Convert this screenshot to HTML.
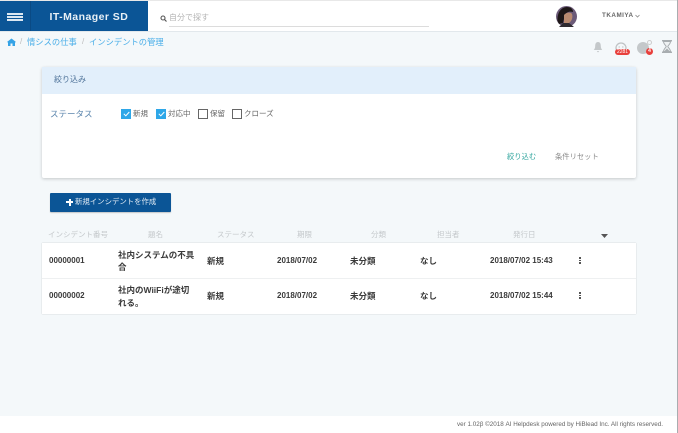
<!DOCTYPE html>
<html lang="ja"><head><meta charset="utf-8">
<style>
html,body{margin:0;padding:0}
body{width:678px;height:433px;position:relative;overflow:hidden;background:#f4f8fa;font-family:"Liberation Sans","Noto Sans CJK JP",sans-serif;color:#333}
#w{left:0;top:0;width:678px;height:433px;filter:blur(.3px)}
div,span{position:absolute;white-space:nowrap}
.t{line-height:12px}
.h{font-size:7.5px;color:#c4c8cb;top:229px}
.c{font-size:8px;font-weight:bold;color:#3a3a3a;line-height:12px}
.cb{width:10px;height:10px;top:109px;box-sizing:border-box;border:1px solid #666;background:#fff}
.on{background:#2ea7e8;border-color:#2ea7e8}
.l{font-size:7.5px;color:#666;top:108px;line-height:12px}
</style></head><body><div id="w">
<div style="left:0;top:0;width:678px;height:1px;background:#e8e8e8"></div>
<div style="left:0;top:1px;width:678px;height:30px;background:#fff;border-bottom:1px solid #e2e8ec"></div>
<div style="left:0;top:1px;width:148px;height:30px;background:#0b5596"></div>
<div style="left:30px;top:1px;width:1px;height:30px;background:#0a4a84"></div>
<div style="left:7px;top:13px;width:16px;height:1.5px;background:#dce8f2"></div>
<div style="left:7px;top:16px;width:16px;height:1.5px;background:#dce8f2"></div>
<div style="left:7px;top:19px;width:16px;height:1.5px;background:#dce8f2"></div>
<div class="t" style="left:49.5px;top:10.500px;font-size:10.500px;font-weight:bold;color:#e8f0f6;letter-spacing:.45px">IT-Manager SD</div>
<svg style="position:absolute;left:160px;top:15px" width="7" height="7" viewBox="0 0 7 7"><circle cx="3" cy="3" r="2" fill="none" stroke="#555" stroke-width="1.1"/><path d="M4.500 4.500L6.500 6.500" stroke="#555" stroke-width="1.2"/></svg>
<div class="t" style="left:169px;top:12px;font-size:8px;color:#b5b5b5">自分で探す</div>
<div style="left:169px;top:26px;width:260px;height:1px;background:#dcdcdc"></div>
<svg style="position:absolute;left:556px;top:6px" width="21" height="21" viewBox="0 0 21 21"><circle cx="10.500" cy="10.500" r="10.500" fill="#6b5a78"/><path d="M1.500 15C1 7 5 1 11 1C15 1 17 3 17 6C14 5 10 6 9 9L7 17L3 18Z" fill="#1e1718"/><path d="M8 9C10 6 15 6 16 8C17 11 16 15 13 17L8 17Z" fill="#b98a70"/><path d="M3 21L7 17L13 17L18 21Z" fill="#2f2a30"/></svg>
<div class="t" style="left:602px;top:10px;font-size:6.300px;font-weight:bold;color:#666;letter-spacing:.5px">TKAMIYA</div>
<svg style="position:absolute;left:635px;top:14px" width="5" height="4" viewBox="0 0 5 4"><path d="M.5 1L2.500 3L4.500 1" fill="none" stroke="#888" stroke-width=".8"/></svg>

<svg style="position:absolute;left:7px;top:38px" width="9" height="8" viewBox="0 0 9 8"><path d="M0 4L4.500 .5L9 4L8 4.500V8H5.500V5.500H3.500V8H1V4.500Z" fill="#35a3e6"/></svg>
<div class="t" style="left:20px;top:36px;font-size:8px;color:#bbb">/</div>
<div class="t" style="left:27px;top:36px;font-size:8.300px;color:#4aaee8">情シスの仕事</div>
<div class="t" style="left:82px;top:36px;font-size:8px;color:#bbb">/</div>
<div class="t" style="left:89px;top:36px;font-size:8.300px;color:#4aaee8">インシデントの管理</div>

<svg style="position:absolute;left:592px;top:41px" width="12" height="12" viewBox="0 0 12 12"><path d="M6 1C3.800 1 3.200 3 3.200 5C3.200 7 2.500 8 1.800 9H10.200C9.500 8 8.800 7 8.800 5C8.800 3 8.200 1 6 1Z" fill="#c4c8ca"/><path d="M4.800 10H7.200L6 11.500Z" fill="#c4c8ca"/></svg>
<svg style="position:absolute;left:614px;top:42px" width="14" height="12" viewBox="0 0 14 12"><circle cx="7" cy="6" r="5" fill="none" stroke="#bfc3c5" stroke-width="1.300"/><path d="M4.500 5H6M8 5H9.500" stroke="#bfc3c5"/></svg>
<div style="left:615px;top:49px;width:15px;height:6px;border-radius:3px;background:#e8403c;color:#fff;font-size:5px;line-height:6px;text-align:center">2281</div>
<div style="left:637px;top:42px;width:12px;height:12px;border-radius:50%;background:#c4c8ca"></div>
<div style="left:647px;top:40px;width:3px;height:3px;border:1px solid #ccc;border-radius:50%"></div>
<div style="left:646px;top:48px;width:7px;height:7px;border-radius:50%;background:#e8403c;color:#fff;font-size:5px;font-weight:bold;line-height:7px;text-align:center">4</div>
<svg style="position:absolute;left:661px;top:40px" width="12" height="13" viewBox="0 0 12 13"><path d="M1 .8H11M1 12.200H11" stroke="#a8adb0" stroke-width="1.500"/><path d="M2.500 1.500H9.500C9.500 4 7 5.500 6.800 6.500C7 7.500 9.500 9 9.500 11.500H2.500C2.500 9 5 7.500 5.200 6.500C5 5.500 2.500 4 2.500 1.500Z" fill="#eef1f2" stroke="#a8adb0"/><path d="M3.500 11H8.500L6 8.500Z" fill="#a8adb0"/></svg>

<div style="left:42px;top:67px;width:594px;height:111px;background:#fff;border-radius:2px;box-shadow:0 1px 3px rgba(0,0,0,.2)"></div>
<div style="left:42px;top:67px;width:594px;height:27px;background:#e2effb"></div>
<div class="t" style="left:54px;top:74px;font-size:8px;color:#4f7399">絞り込み</div>
<div class="t" style="left:50px;top:108px;font-size:8.500px;color:#5c86ad">ステータス</div>
<div class="cb on" style="left:121px"></div><svg style="position:absolute;left:123px;top:111px" width="7" height="6" viewBox="0 0 7 6"><path d="M.8 2.800L2.800 4.800L6.300 1" fill="none" stroke="#fff" stroke-width="1"/></svg>
<div class="l" style="left:133px">新規</div>
<div class="cb on" style="left:156px"></div><svg style="position:absolute;left:158px;top:111px" width="7" height="6" viewBox="0 0 7 6"><path d="M.8 2.800L2.800 4.800L6.300 1" fill="none" stroke="#fff" stroke-width="1"/></svg>
<div class="l" style="left:168px">対応中</div>
<div class="cb" style="left:198px"></div>
<div class="l" style="left:210px">保留</div>
<div class="cb" style="left:232px"></div>
<div class="l" style="left:244px">クローズ</div>
<div class="t" style="left:507px;top:151px;font-size:7.300px;color:#35a7a0">絞り込む</div>
<div class="t" style="left:555px;top:151px;font-size:7.300px;color:#8a8a8a">条件リセット</div>

<div style="left:50px;top:193px;width:121px;height:19px;background:#0b5596;border-radius:1px;box-shadow:0 1px 1px rgba(0,0,0,.2)"></div>
<div style="left:66px;top:201px;width:7px;height:2px;background:#fff"></div>
<div style="left:68.500px;top:198.500px;width:2px;height:7px;background:#fff"></div>
<div class="t" style="left:75px;top:196px;font-size:7.400px;color:#e4edf5">新規インシデントを作成</div>

<div class="h" style="left:48px">インシデント番号</div>
<div class="h" style="left:148px">題名</div>
<div class="h" style="left:217px">ステータス</div>
<div class="h" style="left:297px">期限</div>
<div class="h" style="left:371px">分類</div>
<div class="h" style="left:437px">担当者</div>
<div class="h" style="left:513px">発行日</div>
<svg style="position:absolute;left:601px;top:234px" width="7" height="4" viewBox="0 0 7 4"><path d="M0 0H7L3.500 4Z" fill="#555"/></svg>

<div style="left:42px;top:243px;width:594px;height:71px;background:#fff;box-shadow:0 0 1px rgba(0,0,0,.25)"></div>
<div style="left:42px;top:278px;width:594px;height:1px;background:#eef0f1"></div>

<div class="c" style="left:49px;top:255px">00000001</div>
<div class="c" style="left:118px;top:249px;font-size:8.500px">社内システムの不具</div>
<div class="c" style="left:118px;top:261px;font-size:8.500px">合</div>
<div class="c" style="left:207px;top:255px;font-size:8.500px">新規</div>
<div class="c" style="left:277px;top:255px">2018/07/02</div>
<div class="c" style="left:350px;top:255px;font-size:8.500px">未分類</div>
<div class="c" style="left:420px;top:255px;font-size:8.500px">なし</div>
<div class="c" style="left:490px;top:255px">2018/07/02 15:43</div>
<div style="left:579px;top:257px;width:1.500px;height:1.500px;background:#555"></div>
<div style="left:579px;top:259.500px;width:1.500px;height:1.500px;background:#555"></div>
<div style="left:579px;top:262px;width:1.500px;height:1.500px;background:#555"></div>

<div class="c" style="left:49px;top:290px">00000002</div>
<div class="c" style="left:118px;top:284px;font-size:8.500px">社内のWiiFiが途切</div>
<div class="c" style="left:118px;top:297px;font-size:8.500px">れる。</div>
<div class="c" style="left:207px;top:290px;font-size:8.500px">新規</div>
<div class="c" style="left:277px;top:290px">2018/07/02</div>
<div class="c" style="left:350px;top:290px;font-size:8.500px">未分類</div>
<div class="c" style="left:420px;top:290px;font-size:8.500px">なし</div>
<div class="c" style="left:490px;top:290px">2018/07/02 15:44</div>
<div style="left:579px;top:292px;width:1.500px;height:1.500px;background:#555"></div>
<div style="left:579px;top:294.500px;width:1.500px;height:1.500px;background:#555"></div>
<div style="left:579px;top:297px;width:1.500px;height:1.500px;background:#555"></div>

<div style="left:0;top:416px;width:678px;height:17px;background:#fff"></div>
<div class="t" style="left:457px;top:419px;font-size:6.300px;color:#666">ver 1.02β ©2018 AI Helpdesk powered by HiBlead Inc. All rights reserved.</div>
<div style="left:677px;top:0;width:1px;height:433px;background:#a9adb0"></div>
</div></body></html>
